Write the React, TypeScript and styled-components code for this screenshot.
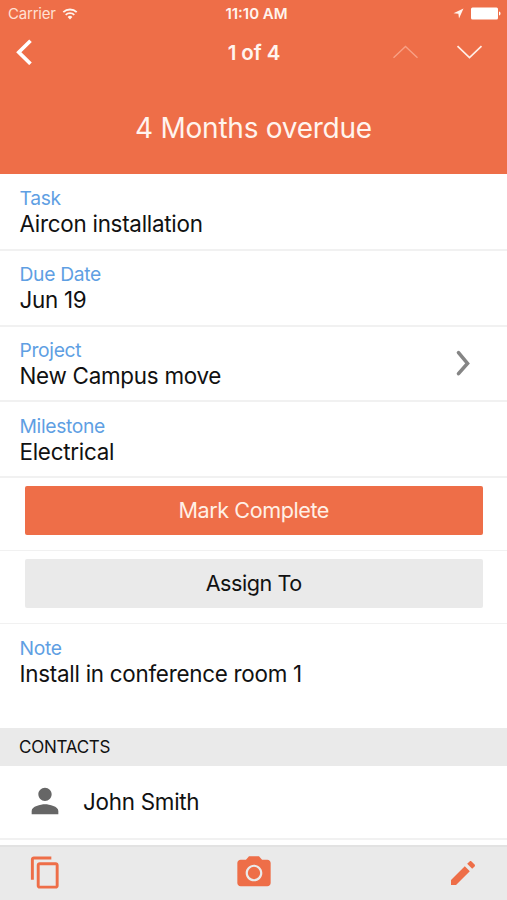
import React from "react";
import styled, { createGlobalStyle } from "styled-components";

const ORANGE = "#ee6e48";
const GREY = "#eaeaea";
const LINE = "#f1f1f1";

const GlobalStyle = createGlobalStyle`
  * { box-sizing: border-box; }
  body { margin: 0; background: #fff; }
`;

const Screen = styled.div`
  display: flex;
  flex-direction: column;
  width: 507px;
  height: 900px;
  overflow: hidden;
  background: #fff;
  color: #111;
  font-family: Inter, "Liberation Sans", sans-serif;
`;

const Header = styled.header`
  flex: none;
  height: 174px;
  margin-bottom: 1px;
  background: ${ORANGE};
  color: #fff4ee;
`;

const StatusBar = styled.div`
  display: grid;
  grid-template-columns: 1fr auto 1fr;
  align-items: center;
  height: 27px;
  padding: 0 6px 0 8px;
  font-size: 15px;
`;

const Carrier = styled.div`
  display: flex;
  align-items: center;
  gap: 6.5px;
  color: #ffe0d3;
  letter-spacing: -0.2px;
`;

const Clock = styled.div`
  font-weight: 600;
  font-size: 15px;
  padding-left: 4px;
`;

const StatusIcons = styled.div`
  display: flex;
  justify-content: flex-end;
  align-items: center;
  gap: 7px;
`;

const NavBar = styled.nav`
  display: grid;
  grid-template-columns: 1fr auto 1fr;
  align-items: center;
  height: 50px;
  padding: 0 24px 0 14px;
`;

const Title = styled.h1`
  margin: 0;
  padding-left: 11px;
  font-size: 20.5px;
  font-weight: 600;
  letter-spacing: -0.1px;
`;

const Arrows = styled.div`
  display: flex;
  justify-content: flex-end;
  gap: 37px;
`;

const Overdue = styled.div`
  height: 102px;
  line-height: 102px;
  text-align: center;
  font-size: 28px;
  letter-spacing: -0.25px;
`;

const Field = styled.section<{ $height: number; $line?: boolean }>`
  flex: none;
  display: flex;
  justify-content: space-between;
  align-items: center;
  height: ${(p) => p.$height}px;
  padding: 0 36px 0 19.5px;
  border-bottom: ${(p) => (p.$line === false ? "none" : `2px solid ${LINE}`)};
`;

const FieldText = styled.div`
  align-self: flex-start;
  padding-top: 11.3px;
`;

const Label = styled.div`
  height: 25px;
  line-height: 25px;
  font-size: 19.3px;
  letter-spacing: -0.33px;
  color: #5f9fe3;
`;

const Value = styled.div`
  height: 25px;
  line-height: 25px;
  font-size: 22.4px;
  letter-spacing: -0.26px;
  white-space: nowrap;
`;

const ButtonRow = styled.div<{ $height: number }>`
  flex: none;
  height: ${(p) => p.$height}px;
  padding: 8px 24.5px 0 25px;
  border-bottom: 1.5px solid ${LINE};
`;

const Button = styled.button<{ $primary?: boolean }>`
  display: block;
  width: 100%;
  height: 49px;
  padding: 0;
  border: 0;
  border-radius: 2px;
  background: ${(p) => (p.$primary ? ORANGE : GREY)};
  color: ${(p) => (p.$primary ? "#fff0e6" : "#111")};
  font: inherit;
  font-size: 21.6px;
  letter-spacing: -0.44px;
  line-height: 49px;
`;

const SectionHeader = styled.h2`
  flex: none;
  height: 38px;
  margin: 0;
  padding-left: 19px;
  background: ${GREY};
  font-size: 17px;
  font-weight: 400;
  letter-spacing: -0.25px;
  line-height: 38px;
`;

const Contact = styled.div`
  flex: none;
  display: flex;
  align-items: center;
  gap: 18px;
  height: 74px;
  padding-left: 25px;
  border-bottom: 2px solid ${LINE};
`;

const Toolbar = styled.footer`
  display: grid;
  grid-template-columns: 1fr auto 1fr;
  align-items: center;
  height: 55px;
  margin-top: auto;
  padding: 0 28px 2px 28px;
  border-top: 2px solid #e2e2e2;
  background: ${GREY};
  color: ${ORANGE};
  svg:last-child { justify-self: end; }
`;

const Glyph = styled.svg`
  display: block;
  flex: none;
`;

const MaterialIcon = ({ size, d }: { size: number; d: string }) => (
  <Glyph width={size} height={size} viewBox="0 0 24 24" fill="currentColor">
    <path d={d} />
  </Glyph>
);

const COPY =
  "M16 1H4c-1.1 0-2 .9-2 2v14h2V3h12V1zm3 4H8c-1.1 0-2 .9-2 2v14c0 1.1.9 2 2 2h11c1.1 0 2-.9 2-2V7c0-1.1-.9-2-2-2zm0 16H8V7h11v14z";
const EDIT =
  "M3 17.25V21h3.75L17.1 10.650l-3.75-3.75L3 17.25zM20.71 7.04c.39-.39.39-1.02 0-1.41l-2.34-2.34c-.39-.39-1.02-.39-1.41 0l-1.83 1.83 3.75 3.75 1.83-1.83z";
const PERSON =
  "M12 12c2.21 0 4-1.79 4-4s-1.79-4-4-4-4 1.79-4 4 1.79 4 4 4zm0 2c-2.67 0-8 1.34-8 4v2h16v-2c0-2.66-5.33-4-8-4z";
const CAMERA =
  "M9 2L7.17 4H4c-1.1 0-2 .9-2 2v12c0 1.1.9 2 2 2h16c1.1 0 2-.9 2-2V6c0-1.1-.9-2-2-2h-3.17L15 2H9zm3 15c-2.76 0-5-2.24-5-5s2.24-5 5-5 5 2.24 5 5-2.24 5-5 5zM15.7 12a3.7 3.7 0 1 1-7.4 0a3.7 3.7 0 1 1 7.4 0z";

const PersonGlyph = styled.div`
  margin-top: -2px;
  color: #666;
`;

const fields = [
  { label: "Task", value: "Aircon installation" },
  { label: "Due Date", value: "Jun 19" },
  { label: "Project", value: "New Campus move", link: true },
  { label: "Milestone", value: "Electrical" },
];

export default function App() {
  return (
    <>
      <GlobalStyle />
      <Screen>
        <Header>
          <StatusBar>
            <Carrier>
              Carrier
              <Glyph width="16" height="12" viewBox="0 0 15 12" fill="none" stroke="#fff4ee" strokeWidth="1.8">
                <path d="M0.8 4.2a9.6 9.6 0 0 1 13.4 0M3.2 6.8a6.2 6.2 0 0 1 8.6 0" />
                <path d="M7.5 11.4L5.1 9a3.4 3.4 0 0 1 4.8 0z" fill="#fff4ee" stroke="none" />
              </Glyph>
            </Carrier>
            <Clock>11:10 AM</Clock>
            <StatusIcons>
              <Glyph width="11" height="11" viewBox="0 0 11 11" fill="#fff4ee">
                <path d="M10.5 0.5L0.5 5.2l4.900 0.5 0.6 4.8z" />
              </Glyph>
              <Glyph width="30" height="13" viewBox="0 0 30 13" fill="#fff">
                <rect x="0" y="0.5" width="27" height="12" rx="1.5" />
                <path d="M28 4.5c2 0.5 2 3.5 0 4z" />
              </Glyph>
            </StatusIcons>
          </StatusBar>
          <NavBar>
            <Glyph width="19" height="26" viewBox="0 0 19 26" fill="none" stroke="#fff" strokeWidth="3.7">
              <path d="M16.500 1.800L4.800 13.300l11.700 11.500" />
            </Glyph>
            <Title>1 of 4</Title>
            <Arrows>
              <Glyph width="27" height="14" viewBox="0 0 27 14" fill="none" stroke="#f8a085" strokeWidth="1.400">
                <path d="M1.500 12.800L13.500 1.500L25.500 12.800" />
              </Glyph>
              <Glyph width="27" height="14" viewBox="0 0 27 14" fill="none" stroke="#ffeee6" strokeWidth="1.700">
                <path d="M1.500 1.200L13.500 12.500L25.500 1.200" />
              </Glyph>
            </Arrows>
          </NavBar>
          <Overdue>4 Months overdue</Overdue>
        </Header>
        {fields.map((f) => (
          <Field key={f.label} $height={75.75}>
            <FieldText>
              <Label>{f.label}</Label>
              <Value>{f.value}</Value>
            </FieldText>
            {f.link && (
              <Glyph width="16" height="28" viewBox="0 0 16 28" fill="none" stroke="#858585" strokeWidth="3.600" strokeLinecap="round">
                <path d="M3.500 3.600L12.500 14.400L3.500 24.600" />
              </Glyph>
            )}
          </Field>
        ))}
        <ButtonRow $height={73}>
          <Button $primary>Mark Complete</Button>
        </ButtonRow>
        <ButtonRow $height={73.3}>
          <Button>Assign To</Button>
        </ButtonRow>
        <Field $height={103.7} $line={false}>
          <FieldText>
            <Label>Note</Label>
            <Value>Install in conference room 1</Value>
          </FieldText>
        </Field>
        <SectionHeader>CONTACTS</SectionHeader>
        <Contact>
          <PersonGlyph>
            <MaterialIcon size={40} d={PERSON} />
          </PersonGlyph>
          <Value>John Smith</Value>
        </Contact>
        <Toolbar>
          <MaterialIcon size={35} d={COPY} />
          <MaterialIcon size={40} d={CAMERA} />
          <MaterialIcon size={32} d={EDIT} />
        </Toolbar>
      </Screen>
    </>
  );
}
